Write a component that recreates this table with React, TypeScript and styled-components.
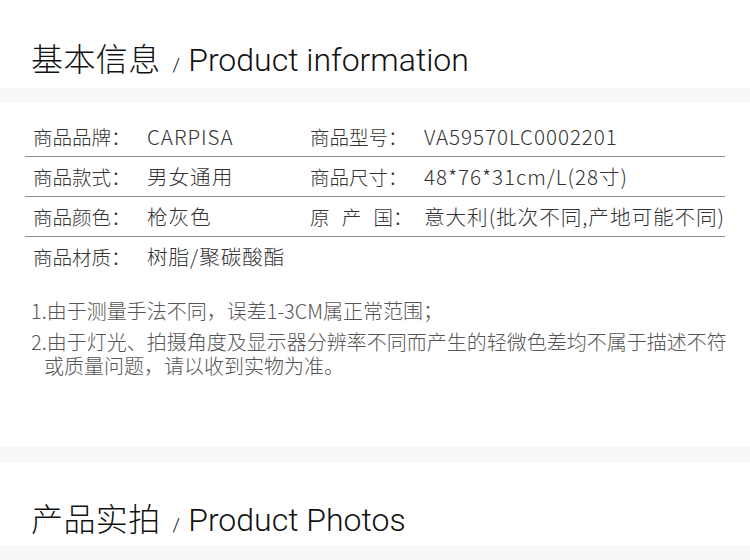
import styled, { createGlobalStyle } from 'styled-components';

const GlobalStyle = createGlobalStyle`
  body {
    margin: 0;
    background: #fff;
    font-family: "Noto Sans CJK SC", "Noto Sans", sans-serif;
  }
`;

const Page = styled.div`
  width: 750px;
  background: #fff;
`;

/* section heading: big chinese, small slash, english subtitle */
const Heading = styled.div<{ $height: number; $bottom: number }>`
  height: ${p => p.$height}px;
  box-sizing: border-box;
  padding: 0 0 ${p => p.$bottom}px 31px;
  display: flex;
  align-items: flex-end;
`;

const HeadingText = styled.h2`
  margin: 0;
  display: flex;
  align-items: baseline;
  font-weight: 400;
  color: #111;
  line-height: 1;
`;

const HeadingCn = styled.span`
  font-family: "Noto Sans CJK SC", sans-serif;
  font-size: 32px;
  font-weight: 300;
  letter-spacing: 0.4px;
`;

const HeadingSlash = styled.span`
  font-family: "Roboto", sans-serif;
  font-weight: 300;
  font-size: 19px;
  margin: 0 8px 0 12px;
`;

const HeadingEn = styled.span`
  font-family: "Roboto", sans-serif;
  font-weight: 300;
  font-size: 32px;
`;

const Band = styled.div<{ $height: number }>`
  height: ${p => p.$height}px;
  background: #f8f8f8;
`;

const Table = styled.div`
  margin: 14px 25px 0;
`;

const Row = styled.div<{ $last?: boolean }>`
  height: 40px;
  box-sizing: border-box;
  padding-left: 8px;
  padding-bottom: 2px;
  display: grid;
  grid-template-columns: 277px 1fr;
  align-items: center;
  border-bottom: ${p => (p.$last ? 'none' : '1px solid #8c8c8c')};
`;

const Cell = styled.div`
  display: flex;
  align-items: baseline;
  color: #333;
  font-weight: 300;
  white-space: nowrap;
`;

const Label = styled.span`
  width: 114px;
  flex-shrink: 0;
  font-size: 19.5px;
  word-spacing: 8px;
`;

const Value = styled.span`
  font-size: 20.6px;
  letter-spacing: 0.95px;
`;

const Notes = styled.div`
  margin: 22px 0 0 31px;
  width: 700px;
  font-size: 20px;
  font-weight: 300;
  line-height: 24px;
  color: #555;
  height: 148px;
`;

const Note = styled.p`
  margin: 0 0 7px;
  padding-left: 13px;
  text-indent: -13px;
`;

const rows: [string, string, string?, string?][] = [
  ['商品品牌：', 'CARPISA', '商品型号：', 'VA59570LC0002201'],
  ['商品款式：', '男女通用', '商品尺寸：', '48*76*31cm/L(28寸)'],
  ['商品颜色：', '枪灰色', '原 产 国：', '意大利(批次不同,产地可能不同)'],
  ['商品材质：', '树脂/聚碳酸酯'],
];

export default function App() {
  return (
    <Page>
      <GlobalStyle />
      <Heading $height={88} $bottom={12}>
        <HeadingText>
          <HeadingCn>基本信息</HeadingCn>
          <HeadingSlash>/</HeadingSlash>
          <HeadingEn>Product information</HeadingEn>
        </HeadingText>
      </Heading>
      <Band $height={15} />

      <Table>
        {rows.map((r, i) => (
          <Row key={i} $last={i === rows.length - 1}>
            <Cell>
              <Label>{r[0]}</Label>
              <Value>{r[1]}</Value>
            </Cell>
            {r[2] && (
              <Cell>
                <Label>{r[2]}</Label>
                <Value>{r[3]}</Value>
              </Cell>
            )}
          </Row>
        ))}
      </Table>

      <Notes>
        <Note>1.由于测量手法不同，误差1-3CM属正常范围；</Note>
        <Note>2.由于灯光、拍摄角度及显示器分辨率不同而产生的轻微色差均不属于描述不符或质量问题，请以收到实物为准。</Note>
      </Notes>

      <Band $height={16} />
      <Heading $height={82} $bottom={9}>
        <HeadingText>
          <HeadingCn>产品实拍</HeadingCn>
          <HeadingSlash>/</HeadingSlash>
          <HeadingEn>Product Photos</HeadingEn>
        </HeadingText>
      </Heading>
      <Band $height={17} />
    </Page>
  );
}
